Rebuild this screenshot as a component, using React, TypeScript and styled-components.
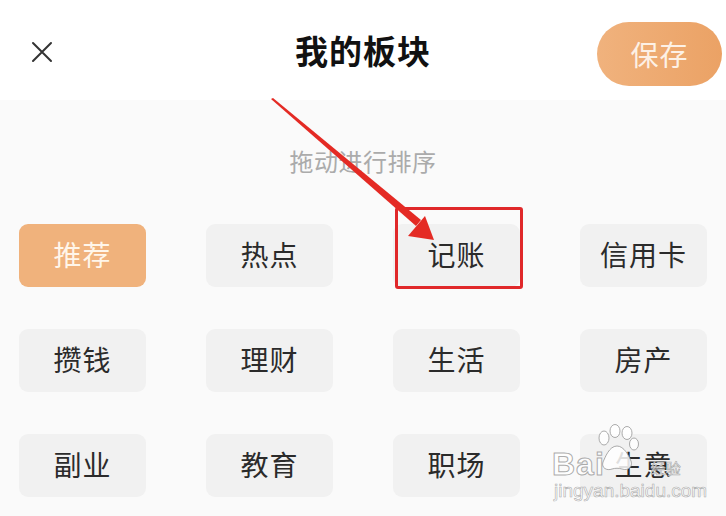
import styled, { createGlobalStyle } from "styled-components";

const GlobalStyle = createGlobalStyle`
  html, body {
    margin: 0;
    padding: 0;
    background: #fafafa;
    font-family: "Noto Sans CJK SC", "Noto Sans", sans-serif;
  }
`;

const Page = styled.div`
  position: relative;
  width: 726px;
  height: 516px;
  overflow: hidden;
  background: #fafafa;
`;

const Header = styled.header`
  height: 100px;
  background: #ffffff;
  display: grid;
  grid-template-columns: 1fr auto 1fr;
  align-items: center;
`;

const CloseButton = styled.button`
  justify-self: start;
  margin-left: 29px;
  margin-top: 4px;
  width: 26px;
  height: 26px;
  padding: 0;
  border: none;
  background: none;
  display: flex;
  align-items: center;
  justify-content: center;
`;

const Title = styled.h1`
  margin: 0;
  font-size: 33px;
  font-weight: 700;
  color: #111;
  letter-spacing: 1px;
`;

const SaveButton = styled.button`
  justify-self: end;
  margin-right: 4px;
  margin-top: 8px;
  width: 125px;
  height: 64px;
  border: none;
  border-radius: 32px;
  background: linear-gradient(90deg, #f0b27d 0%, #eba265 100%);
  color: #fdf1e6;
  font-family: inherit;
  font-size: 28px;
  letter-spacing: 1px;
`;

const Main = styled.main`
  padding-top: 46px;
`;

const Hint = styled.p`
  margin: 0;
  text-align: center;
  font-size: 24px;
  line-height: 30px;
  color: #ababab;
  letter-spacing: 0.5px;
`;

const Grid = styled.div`
  margin-top: 48px;
  padding-left: 19px;
  display: grid;
  grid-template-columns: repeat(4, 127px);
  grid-auto-rows: 63px;
  column-gap: 60px;
  row-gap: 42px;
`;

const Chip = styled.div<{ $active?: boolean }>`
  position: relative;
  border-radius: 9px;
  display: flex;
  align-items: center;
  justify-content: center;
  padding-bottom: 3px;
  box-sizing: border-box;
  font-size: 28px;
  letter-spacing: 1px;
  background: ${(p) => (p.$active ? "#f0b27c" : "#f1f1f1")};
  color: ${(p) => (p.$active ? "#fff6ea" : "#2b2b2b")};
`;

const Highlight = styled.span`
  position: absolute;
  top: -17px;
  left: 2px;
  right: -3px;
  bottom: -2px;
  border: 3px solid #e0282a;
  border-radius: 3px;
`;

const Overlay = styled.svg`
  position: absolute;
  inset: 0;
  pointer-events: none;
`;

const Watermark = styled.div`
  position: absolute;
  left: 552px;
  top: 424px;
  display: flex;
  flex-direction: column;
  pointer-events: none;
  color: rgba(255, 255, 255, 0.85);
`;

const WmRow = styled.div`
  display: flex;
  align-items: flex-end;
  height: 56px;
`;

const WmBrand = styled.span`
  font-family: "Liberation Sans", Arial, sans-serif;
  font-size: 32px;
  line-height: 32px;
  font-weight: 700;
  -webkit-text-stroke: 1px rgba(150, 150, 150, 0.8);
  letter-spacing: 1px;
`;

const WmSuffix = styled.span`
  font-size: 15px;
  line-height: 24px;
  margin-left: 22px;
  -webkit-text-stroke: 0.6px rgba(150, 150, 150, 0.8);
`;

const WmUrl = styled.span`
  margin-left: 2px;
  font-family: "Liberation Sans", Arial, sans-serif;
  font-size: 19px;
  line-height: 22px;
  -webkit-text-stroke: 0.6px rgba(150, 150, 150, 0.8);
`;

const Paw = styled.svg`
  align-self: flex-start;
  margin-left: -12px;
  margin-right: -12px;
`;

const items = [
  "推荐", "热点", "记账", "信用卡",
  "攒钱", "理财", "生活", "房产",
  "副业", "教育", "职场", "生意",
];

export default function App() {
  return (
    <>
      <GlobalStyle />
      <Page>
        <Header>
          <CloseButton aria-label="关闭">
            <svg width="22" height="22" viewBox="0 0 22 22">
              <path d="M2 2 L20 20 M20 2 L2 20" stroke="#333" strokeWidth="2" strokeLinecap="round" />
            </svg>
          </CloseButton>
          <Title>我的板块</Title>
          <SaveButton>保存</SaveButton>
        </Header>
        <Main>
          <Hint>拖动进行排序</Hint>
          <Grid>
            {items.map((name, i) => (
              <Chip key={name} $active={i === 0}>
                {name}
                {name === "记账" && <Highlight />}
              </Chip>
            ))}
          </Grid>
        </Main>
        <Overlay width="726" height="516" viewBox="0 0 726 516">
          <polygon points="271,99 273,98 421,220 416,226" fill="#e42a24" />
          <polygon points="434,240 408,236 425,216" fill="#e42a24" />
        </Overlay>
        <Watermark>
          <WmRow>
            <WmBrand>Bai</WmBrand>
            <Paw width="48" height="48" viewBox="0 0 48 48">
              <g fill="rgba(255,255,255,0.85)" stroke="rgba(150,150,150,0.8)" strokeWidth="1">
                <ellipse cx="11" cy="14" rx="5" ry="7" />
                <ellipse cx="22" cy="7" rx="5" ry="6.5" />
                <ellipse cx="34" cy="9" rx="5" ry="6.5" />
                <ellipse cx="41" cy="20" rx="4.5" ry="6" />
                <path d="M24 22 C16 22 12 34 10 38 C8 44 14 47 19 45 C22 44 26 44 29 45 C35 47 40 43 38 37 C36 32 31 22 24 22 Z" />
              </g>
            </Paw>
            <WmSuffix>经验</WmSuffix>
          </WmRow>
          <WmUrl>jingyan.baidu.com</WmUrl>
        </Watermark>
      </Page>
    </>
  );
}
